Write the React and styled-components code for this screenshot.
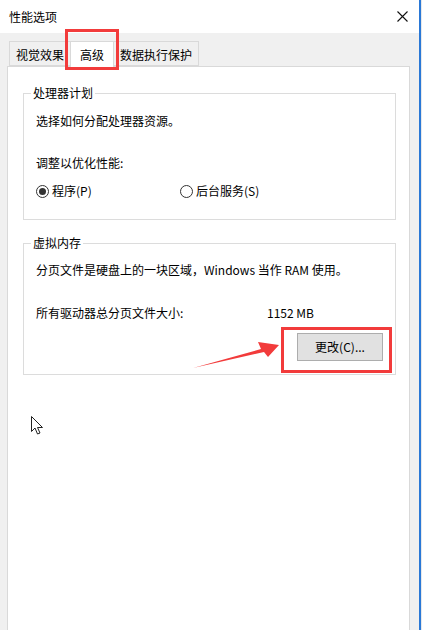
import React from 'react';
import styled, { createGlobalStyle } from 'styled-components';

const Global = createGlobalStyle`
  html, body {
    margin: 0;
    padding: 0;
    background: #e8e8e8;
  }
  body {
    font-family: "Noto Sans CJK SC", "Noto Sans", sans-serif;
    font-size: 12px;
    color: #000;
  }
`;

const Dialog = styled.div`
  position: relative;
  width: 419px;
  height: 630px;
  background: #f0f0f0;
  border-right: 2px solid #2a78d6;
  overflow: hidden;
  display: flex;
  flex-direction: column;
`;

const TitleBar = styled.div`
  height: 33px;
  flex: none;
  background: #fff;
  display: flex;
  align-items: center;
  justify-content: space-between;
  padding: 0 11px 0 9px;
  line-height: 16px;
`;

const Close = styled.svg`
  width: 11px;
  height: 11px;
`;

const TabRow = styled.div`
  display: flex;
  align-items: flex-end;
  margin: 9px 0 0 9px;
  height: 24px;
  position: relative;
  z-index: 1;
`;

const Tab = styled.div`
  height: ${p => (p.active ? '25px' : '21px')};
  padding: 0 ${p => (p.active ? '9px' : '6px')};
  margin: 0 ${p => (p.active ? '-1px' : '0')};
  margin-bottom: ${p => (p.active ? '-1px' : '0')};
  background: ${p => (p.active ? '#fff' : '#f0f0f0')};
  border: 1px solid #d9d9d9;
  border-bottom: ${p => (p.active ? 'none' : '1px solid #d9d9d9')};
  display: flex;
  align-items: center;
  line-height: 16px;
  position: relative;
  z-index: ${p => (p.active ? 2 : 1)};
  padding-top: ${p => (p.active ? '0' : '2px')};
`;

const Panel = styled.div`
  flex: 1;
  margin-left: 7px;
  width: 403px;
  background: #fff;
  border: 1px solid #d9d9d9;
  border-bottom: none;
  padding: 26px 13px 0 15px;
  box-sizing: border-box;
  display: flex;
  flex-direction: column;
  gap: 23px;
`;

const Group = styled.section`
  border: 1px solid #dcdcdc;
  padding: 0 12px;
  height: ${p => p.h}px;
  box-sizing: border-box;
  display: flex;
  flex-direction: column;
  position: relative;
  flex: none;
`;

/* caption sits over the group's top border */
const Legend = styled.span`
  position: absolute;
  left: 7px;
  top: -8px;
  padding: 0 2px;
  background: #fff;
  line-height: 14px;
`;

const Line = styled.div`
  line-height: 16px;
  margin-top: ${p => p.mt || 0}px;
  display: flex;
  align-items: center;
`;

const Value = styled.span`
  margin-left: auto;
  width: 116px;
`;

const RadioRow = styled.div`
  display: flex;
  margin-top: ${p => p.mt}px;
  line-height: 16px;
`;

const Radio = styled.label`
  display: flex;
  align-items: center;
  gap: 3px;
  width: 144px;
`;

const Circle = styled.span`
  width: 11px;
  height: 11px;
  border: 1px solid #333;
  border-radius: 50%;
  display: flex;
  align-items: center;
  justify-content: center;
  &::after {
    content: '';
    display: ${p => (p.checked ? 'block' : 'none')};
    width: 7px;
    height: 7px;
    border-radius: 50%;
    background: #333;
  }
`;

const ButtonRow = styled.div`
  display: flex;
  justify-content: flex-end;
  margin-top: 12px;
`;

const Button = styled.button`
  width: 86px;
  height: 28px;
  background: #e1e1e1;
  border: 1px solid #adadad;
  font-family: inherit;
  font-size: 12px;
  color: #000;
  padding: 0;
  line-height: 16px;
`;

const RedBox = styled.div`
  position: absolute;
  left: ${p => p.x}px;
  top: ${p => p.y}px;
  width: ${p => p.w}px;
  height: ${p => p.h}px;
  border: 3px solid #f23b3b;
  box-sizing: border-box;
  z-index: 5;
`;

const Overlay = styled.svg`
  position: absolute;
  left: 0;
  top: 0;
  width: 422px;
  height: 630px;
  pointer-events: none;
  z-index: 6;
`;

export default function App() {
  return (
    <>
      <Global />
      <Dialog>
        <TitleBar>
          <span>性能选项</span>
          <Close viewBox="0 0 11 11">
            <path d="M0.5 0.5 L10.5 10.5 M10.5 0.5 L0.5 10.5" stroke="#111" strokeWidth="1.1" />
          </Close>
        </TitleBar>
        <TabRow>
          <Tab>视觉效果</Tab>
          <Tab active>高级</Tab>
          <Tab>数据执行保护</Tab>
        </TabRow>
        <Panel>
          <Group h={127}>
            <Legend>处理器计划</Legend>
            <Line mt={19}>选择如何分配处理器资源。</Line>
            <Line mt={26}>调整以优化性能:</Line>
            <RadioRow mt={12}>
              <Radio><Circle checked />程序(P)</Radio>
              <Radio><Circle />后台服务(S)</Radio>
            </RadioRow>
          </Group>
          <Group h={132}>
            <Legend>虚拟内存</Legend>
            <Line mt={18}>分页文件是硬盘上的一块区域，Windows 当作 RAM 使用。</Line>
            <Line mt={27}>
              所有驱动器总分页文件大小:
              <Value>1152 MB</Value>
            </Line>
            <ButtonRow>
              <Button>更改(C)...</Button>
            </ButtonRow>
          </Group>
        </Panel>
        <RedBox x={65} y={29} w={54} h={41} />
        <RedBox x={281} y={327} w={111} h={46} />
        <Overlay viewBox="0 0 422 630">
          <polygon
            points="193,368 261,349 258,342 279,345 268,357 264,352"
            fill="#f23b3b"
          />
          <path
            d="M31.5 416.5 L31.5 431.5 L35 428 L37.5 434 L40 433 L37.5 427.5 L42.5 427.5 Z"
            fill="#fff"
            stroke="#222"
            strokeWidth="1"
            strokeLinejoin="miter"
          />
        </Overlay>
      </Dialog>
    </>
  );
}
